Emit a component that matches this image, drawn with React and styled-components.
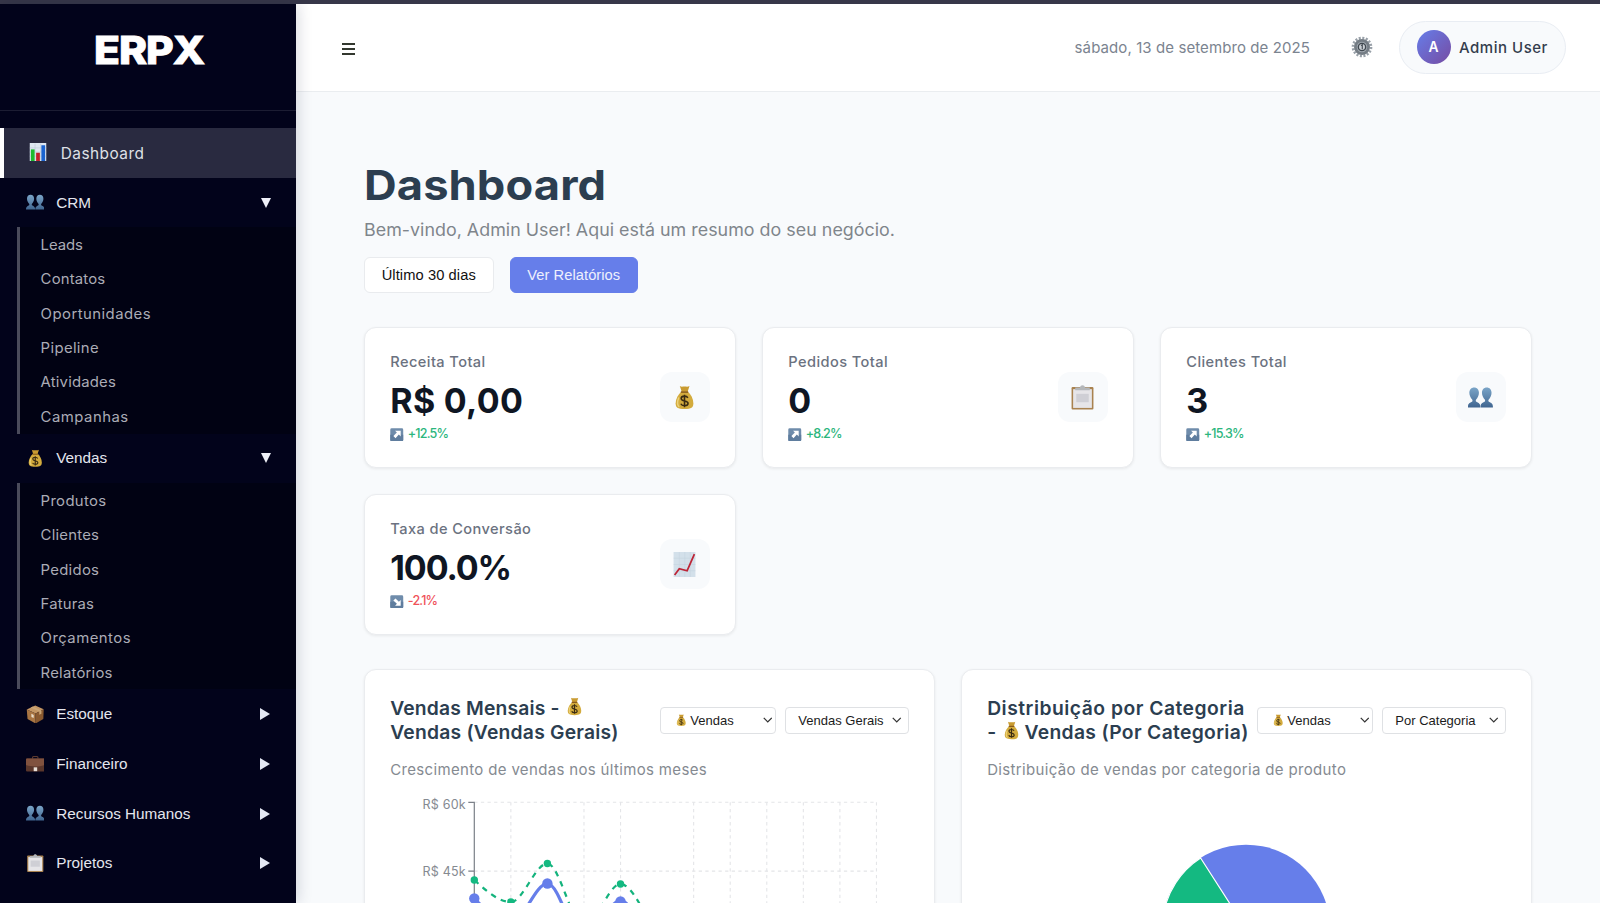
import React from 'react';
import styled, { createGlobalStyle, css } from 'styled-components';

const GlobalStyle = createGlobalStyle`
  *, *::before, *::after { box-sizing: border-box; }
  html, body { margin: 0; padding: 0; height: 100%; overflow: hidden; }
  body { background: #f8fafc; font-family: Inter, "Open Sans", sans-serif; color: #2c3e50; }
  button { font: inherit; color: inherit; border: 0; padding: 0; background: none; }
  h1, h2, p { margin: 0; }
`;

const ui = css`font-family: "Liberation Sans", Arial, sans-serif;`;

/* ---------- Shell ---------- */
const Shell = styled.div`
  display: flex;
  flex-direction: column;
  width: 1600px;
  height: 903px;
  overflow: hidden;
`;
const TopStrip = styled.div`
  flex: 0 0 4px;
  background: #373749;
`;
const Body = styled.div`
  display: flex;
  flex: 1;
  min-height: 0;
`;

/* ---------- Sidebar ---------- */
const Sidebar = styled.aside`
  flex: 0 0 296px;
  background: #02031b;
  box-shadow: 2px 0 14px rgba(15, 20, 50, 0.16);
  z-index: 2;
  overflow: hidden;
`;
const Brand = styled.div`
  height: 107px;
  padding: 23px 0 0 94px;
  border-bottom: 1px solid #1c1d33;
`;
const Logo = styled.div`
  width: max-content;
  color: #fff;
  font-size: 38px;
  line-height: 46px;
  font-weight: 800;
  letter-spacing: -0.9px;
  transform: scaleX(1.12);
  transform-origin: 0 0;
  -webkit-text-stroke: 0.9px #fff;
  paint-order: stroke;
  stroke-linejoin: round;
`;
const Nav = styled.nav`
  padding-top: 17px;
`;
const ActiveLink = styled.a`
  display: flex;
  align-items: center;
  height: 49.7px;
  padding: 1px 0 0 25px;
  border-left: 4.5px solid #fff;
  background: #292a40;
  color: #dfe0e6;
  font-size: 15.4px;
  letter-spacing: 0.46px;

  svg { margin: 0 13.8px 2px 0; }
`;
const GroupRow = styled.button`
  ${ui}
  display: flex;
  align-items: center;
  width: 100%;
  height: 49.7px;
  padding: 0 25px 0 25.5px;
  color: #e4e6ee;
  font-size: 15.3px;
  text-align: left;
`;
const GroupName = styled.span`
  flex: 1;
  padding-left: 12.2px;
`;
const Caret = styled.i`
  width: 0;
  height: 0;
  border-style: solid;
  ${(p) => (p.$open
    ? css`border-width: 10px 5.7px 0; border-color: #eef0f8 transparent transparent;`
    : css`margin-right: 1px; border-width: 6px 0 6px 10.5px; border-color: transparent transparent transparent #e4e8f4;`)}
`;
const SubMenu = styled.div`
  margin-left: 17px;
  border-left: 3px solid #4a4b5b;
  background: #010213;
`;
const SubLink = styled.a`
  display: flex;
  align-items: center;
  height: 34.37px;
  padding-left: 20.6px;
  color: #abacb6;
  font-size: 14.2px;
  letter-spacing: ${(p) => p.$track - 0.35}px;
  transform: scaleX(1.05);
  transform-origin: 20.6px 0;
`;

/* ---------- Header ---------- */
const Main = styled.div`
  flex: 1;
  min-width: 0;
`;
const Header = styled.header`
  display: flex;
  align-items: center;
  height: 87.5px;
  padding: 0 34.5px 0 46px;
  background: #fff;
  border-bottom: 1.5px solid #eaedf0;
`;
const MenuButton = styled.button`
  display: grid;
  gap: 3px;
  width: 12.6px;
  margin: 3px auto 0 0;
`;
const MenuBar = styled.span`
  height: 2px;
  background: #33382f;
`;
const Today = styled.span`
  color: #7b8490;
  font-size: 15px;
  letter-spacing: 0.09px;
`;
const Settings = styled.button`
  display: grid;
  margin: 0 25.5px 0 41px;
`;
const UserPill = styled.div`
  display: flex;
  align-items: center;
  width: 167px;
  height: 53px;
  padding-left: 17px;
  border: 1.5px solid #e9edf3;
  border-radius: 26.5px;
  background: #f8fafc;
  color: #343d4d;
  font-size: 15px;
  font-weight: 500;
  letter-spacing: 0.52px;
`;
const Avatar = styled.span`
  display: grid;
  place-items: center;
  width: 34px;
  height: 34px;
  margin-right: 8.5px;
  border-radius: 50%;
  background: linear-gradient(135deg, #667eea, #764ba2);
  color: #fff;
  font-size: 13.8px;
  font-weight: 600;
  letter-spacing: 0;
`;

/* ---------- Page ---------- */
const Page = styled.main`
  padding: 69px 68px 0 68px;
`;
const Title = styled.h1`
  width: max-content;
  color: #2c3e50;
  font-size: 41.5px;
  font-weight: 700;
  line-height: 49px;
  letter-spacing: 0.1px;
  transform: scaleX(1.09);
  transform-origin: 0 0;
`;
const Subtitle = styled.p`
  width: max-content;
  margin-top: 8.7px;
  color: #7f858b;
  font-size: 17px;
  line-height: 24px;
  letter-spacing: 0.02px;
  transform: scaleX(1.05);
  transform-origin: 0 0;
`;
const Actions = styled.div`
  display: flex;
  gap: 16.5px;
  margin: 14.7px 0 34.5px;
`;
const ActionButton = styled.button`
  ${ui}
  width: ${(p) => (p.$primary ? 127.5 : 129.5)}px;
  height: 36px;
  border: 1.5px solid ${(p) => (p.$primary ? '#667eea' : '#e9ebee')};
  border-radius: 6px;
  background: ${(p) => (p.$primary ? '#667eea' : '#fff')};
  color: ${(p) => (p.$primary ? '#eef0fd' : '#111')};
  font-size: 14.7px;
  letter-spacing: ${(p) => (p.$primary ? 0.05 : 0.08)}px;
`;
const card = css`
  border: 1.5px solid #eaecef;
  border-radius: 12px;
  background: #fff;
  box-shadow: 0 1px 3px rgba(0, 0, 0, 0.07);
`;
const StatGrid = styled.section`
  display: grid;
  grid-template-columns: repeat(3, 1fr);
  grid-auto-rows: 141px;
  gap: 26px;
`;
const StatCard = styled.article`
  ${card}
  display: flex;
  align-items: flex-start;
  justify-content: space-between;
  padding: 23px 25.5px 0 25.3px;
`;
const StatLabel = styled.p`
  color: #6b7280;
  font-size: 14.6px;
  font-weight: 500;
  line-height: 22px;
  letter-spacing: 0.42px;
`;
const StatValue = styled.p`
  margin-top: 7.3px;
  color: #0f1623;
  font-size: 34px;
  font-weight: 700;
  line-height: 40px;
  letter-spacing: ${(p) => p.$track}px;
`;
const Change = styled.p`
  display: flex;
  align-items: center;
  gap: 4px;
  margin-top: 5.7px;
  color: ${(p) => (p.$down ? '#f0525a' : '#2cb67d')};
  font-size: 12.6px;
  font-weight: 500;
  line-height: 16px;
  letter-spacing: -0.85px;
`;
const StatIcon = styled.div`
  display: grid;
  place-items: center;
  width: 50px;
  height: 50px;
  margin-top: 21px;
  border-radius: 12px;
  background: #f8fafc;
`;

/* ---------- Chart cards ---------- */
const ChartGrid = styled.section`
  display: grid;
  grid-template-columns: 1fr 1fr;
  gap: 26px;
  margin-top: 34px;
`;
const ChartCard = styled.article`
  ${card}
  height: 460px;
  padding: 25.7px 25.2px 0 25.2px;
`;
const ChartHead = styled.div`
  display: flex;
  align-items: center;
  justify-content: space-between;
`;
const ChartTitle = styled.h2`
  color: #2c3e50;
  font-size: 19.3px;
  font-weight: 600;
  line-height: 24.2px;
  white-space: nowrap;
`;
const TitleLine = styled.span`
  display: flex;
  align-items: center;
  letter-spacing: ${(p) => p.$track}px;
  svg { margin: 0 4px 3px 5px; }
`;
const Selects = styled.div`
  display: flex;
  gap: 8.5px;
`;
const Select = styled.button`
  ${ui}
  display: flex;
  align-items: center;
  width: ${(p) => p.$width}px;
  height: 27px;
  padding: 0 3px 0 12.5px;
  border: 1.5px solid #dfe1e4;
  border-radius: 4px;
  background: #fff;
  color: #1b1b1b;
  font-size: 13px;
  letter-spacing: 0;

  svg:first-child { margin-right: 3px; margin-left: 1px; }
  svg:last-child { margin-left: auto; }
`;
const ChartNote = styled.p`
  margin-top: 15.8px;
  color: #858a91;
  font-size: 15px;
  line-height: 20px;
  letter-spacing: 0.34px;
`;
const Plot = styled.svg`
  display: block;
  width: 518px;
  height: 300px;
  margin-top: 10.3px;
`;
const AxisText = styled.text`
  fill: #858a91;
  font-size: 12.5px;
  letter-spacing: 0.2px;
`;

/* ---------- Icons ---------- */
function Icon({ name, size = 18 }) {
  return (
    <svg width={size} height={size} viewBox="0 0 24 24" fill="none" aria-hidden="true">
      {glyphs[name]}
    </svg>
  );
}

const bust = 'M0 20.5c0-3 2.6-3.6 4-4.6.5-.4.4-1.4 0-2C2.600 12.300 1.300 10 1.300 7.400 1.300 4.400 3.100 2.300 5.900 2.300s4.600 2.100 4.600 5.100c0 2.600-1.300 4.900-2.700 6.500-.4.600-.5 1.600 0 2 1.400 1 4 1.600 4 4.600v1H0z';

const glyphs = {
  bars: (
    <>
      <rect x="1" y="0" width="22" height="24" fill="#dfe7f1" />
      <path d="M1 6.500h22M1 12h22M1 17.500h22M8 1v22M15.500 1v22" stroke="#b8c6d8" strokeWidth=".7" />
      <rect x="2.500" y="8.500" width="5" height="15.500" fill="#1dbb2f" />
      <rect x="9.500" y="13" width="5" height="11" fill="#c3202b" />
      <rect x="16.500" y="3" width="5" height="21" fill="#1a63cf" />
    </>
  ),
  people: (
    <>
      <defs>
        <linearGradient id="bust" x1="0" y1="2" x2="0" y2="22" gradientUnits="userSpaceOnUse">
          <stop stopColor="#7ba6c9" /><stop offset="1" stopColor="#3f648f" />
        </linearGradient>
      </defs>
      <path d={bust} fill="url(#bust)" />
      <path d={bust} fill="url(#bust)" transform="translate(12.100 0)" />
    </>
  ),
  money: (
    <>
      <path d="M7.500 1c1.500 1 2.500.5 4.500.5S15 2 16.800 1L15 6.500H9.300z" fill="#c99b31" />
      <path d="M9 6.200h6.200c3 3 5.300 6.800 5.300 11.300 0 4-1.800 5.500-8.500 5.500s-8.500-1.500-8.500-5.500C3.500 13 6 9.200 9 6.200z" fill="#d3ab3d" />
      <path d="M6.500 12c-1.500 4-1.500 7.500.5 9" stroke="#ecd27a" strokeWidth="1.400" />
      <path d="M8.500 6.800h7" stroke="#8a5b1c" strokeWidth="1.500" />
      <path d="M15.200 12.300c-.6-1.200-1.800-1.600-3.200-1.600-1.900 0-3.200.9-3.200 2.300 0 3.300 6.600 1.500 6.600 4.600 0 1.500-1.500 2.300-3.400 2.300-1.600 0-2.900-.6-3.500-1.900M12 9.300v12" stroke="#3a2b12" strokeWidth="1.500" />
    </>
  ),
  box: (
    <>
      <path d="M12 .5 23 5.500 12.500 11 1 5.700z" fill="#c39664" />
      <path d="M1 5.700 12.500 11v13L2 18.300z" fill="#a87543" />
      <path d="M23 5.500 12.500 11v13L22.500 18z" fill="#8a5a30" />
      <path d="m6 3.300 11.200 5.200v4.300l2.800-1.500V7L9 2z" fill="#c9a475" />
      <path d="M7 11.500l3 1.500v4l-3-1.500z" fill="#e9dcc9" />
    </>
  ),
  briefcase: (
    <>
      <path d="M8.500 5V3.200c0-.8.500-1.200 1.200-1.200h4.600c.7 0 1.200.4 1.200 1.200V5" stroke="#5d3b30" strokeWidth="1.500" />
      <rect x="0" y="4.500" width="24" height="17" rx="1.500" fill="#5a372c" />
      <path d="M0 6c0-1 .6-1.500 1.500-1.500h21c.9 0 1.500.5 1.500 1.500v7c-7 2.500-17 2.500-24 0z" fill="#80523f" />
      <rect x="10" y="16" width="4.500" height="5" fill="#e9e0d8" />
    </>
  ),
  clipboard: (
    <>
      <rect x="1.500" y="2" width="21" height="21.500" rx="1" fill="#a9824f" />
      <rect x="3" y="4" width="18" height="18" fill="#e6e5e8" />
      <path d="M6 8.500h12v8H6z" fill="#cfcfd5" />
      <path d="M5 2.500h4.500C10 1 10.800.3 12 .3s2 .7 2.500 2.200H19v2.500H5z" fill="#b4b7ba" />
    </>
  ),
  trend: (
    <>
      <rect x="1.500" y="0" width="21" height="24" fill="#d3e0ea" />
      <path d="M1.500 6h21M1.500 12h21M1.500 18h21M7 0v24M12.300 0v24M17.600 0v24" stroke="#c3d2de" strokeWidth=".5" />
      <path d="M2.500 22 7 16l7.500 2L21.500 2" stroke="#bd2537" strokeWidth="1.700" />
    </>
  ),
  gear: (
    <>
      <circle cx="12" cy="12" r="9.800" stroke="#98a0a8" strokeWidth="3" strokeDasharray="2.200 1.649" />
      <circle cx="12" cy="12" r="7.200" fill="#a3abb2" stroke="#747c84" strokeWidth="3" />
      <circle cx="12" cy="12" r="4" fill="#c9ced3" stroke="#3f474f" strokeWidth="1.500" />
      <path d="M11 10.500 12.300 9.500v5" stroke="#3f474f" strokeWidth="1.200" />
    </>
  ),
  up: (
    <>
      <rect x=".5" y=".5" width="23" height="23" rx="2.500" fill="#6f8cab" />
      <path d="M.5 12h23v9a2.500 2.500 0 0 1-2.500 2.500H3A2.500 2.500 0 0 1 .5 21z" fill="#5f7d9e" />
      <path d="M9 5h10v10l-3.300-3.300L9.800 18 6 14.200l6.200-6z" fill="#fff" />
    </>
  ),
  down: (
    <>
      <rect x=".5" y=".5" width="23" height="23" rx="2.500" fill="#6f8cab" />
      <path d="M.5 12h23v9a2.500 2.500 0 0 1-2.500 2.500H3A2.500 2.500 0 0 1 .5 21z" fill="#5f7d9e" />
      <path d="M19 9v10H9l3.300-3.300L6 9.800 9.800 6l6 6.200z" fill="#fff" />
    </>
  ),
};

function Chevron() {
  return (
    <svg width="9.500" height="8" viewBox="0 0 10 8" fill="none">
      <path d="M.8 1.700 5 6 9.200 1.700" stroke="#333" strokeWidth="1.300" />
    </svg>
  );
}

/* ---------- Data ---------- */
const groups = [
  { name: 'CRM', icon: 'people', links: [['Leads', 0.25], ['Contatos', 0.5], ['Oportunidades', 0.78], ['Pipeline', 0.68], ['Atividades', 0.52], ['Campanhas', 0.8]] },
  { name: 'Vendas', icon: 'money', links: [['Produtos', 0.66], ['Clientes', 0.55], ['Pedidos', 0.6], ['Faturas', 0.5], ['Orçamentos', 0.78], ['Relatórios', 0.55]] },
  { name: 'Estoque', icon: 'box' },
  { name: 'Financeiro', icon: 'briefcase' },
  { name: 'Recursos Humanos', icon: 'people' },
  { name: 'Projetos', icon: 'clipboard' },
];

const stats = [
  { label: 'Receita Total', value: 'R$ 0,00', track: 0.3, change: '+12.5%', icon: 'money' },
  { label: 'Pedidos Total', value: '0', track: 0, change: '+8.2%', icon: 'clipboard' },
  { label: 'Clientes Total', value: '3', track: 0, change: '+15.3%', icon: 'people' },
  { label: 'Taxa de Conversão', value: '100.0%', track: -1.1, change: '-2.1%', down: true, icon: 'trend' },
];

const gridColumns = [1, 3, 4, 6, 7, 8, 9, 10, 11];
const step = 36.56;
const axisX = 84.3;

function SalesChart() {
  return (
    <Plot viewBox="0 0 518 300" fill="none">
      <g stroke="#e4e5e8" strokeWidth="1.100" strokeDasharray="3.300 3.300">
        <path d={`M${axisX} 11.300H486.500M${axisX} 80.100H486.500M${axisX} 149H486.500`} />
        {gridColumns.map((n) => <path key={n} d={`M${axisX + n * step} 11.300V220`} />)}
      </g>
      <path d={`M${axisX - 6} 11.300H${axisX}V220M${axisX - 6} 80.100H${axisX}`} stroke="#7b8088" strokeWidth="1.200" />
      <AxisText x="32.500" y="18">R$ 60k</AxisText>
      <AxisText x="32.500" y="85">R$ 45k</AxisText>
      <path
        d="M84.300 107.500C96.500 120 108.700 132 120.900 132 133 132 145.200 92.500 157.400 92.500S181.800 150 194 150 218.300 109.500 230.500 109.500 254.900 150 267 160"
        stroke="#667eea" strokeWidth="3.200"
      />
      <path
        d="M84.300 89C96.500 100 108.700 111 120.900 111 133 111 145.200 72.500 157.400 72.500S181.800 135 194 135 218.300 93 230.500 93 254.900 125 267 145"
        stroke="#14b37d" strokeWidth="2.200" strokeDasharray="5.500 5.500"
      />
      <g fill="#667eea">
        <circle cx="84.300" cy="107.500" r="5.200" /><circle cx="157.400" cy="92.500" r="5.200" /><circle cx="230.500" cy="110.500" r="5.200" />
      </g>
      <g fill="#14b981">
        <circle cx="84.300" cy="89" r="3.700" /><circle cx="120.900" cy="111" r="3.700" /><circle cx="157.400" cy="72.500" r="3.700" /><circle cx="230.500" cy="93" r="3.700" />
      </g>
    </Plot>
  );
}

function CategoryChart() {
  return (
    <Plot viewBox="0 0 518 300">
      <circle cx="259" cy="137.700" r="84" fill="#667eea" />
      <path d="M259 137.700 213.600 67A84 84 0 0 0 200 197.100z" fill="#14b981" stroke="#fff" strokeWidth="1.200" />
    </Plot>
  );
}

export default function App() {
  return (
    <>
      <GlobalStyle />
      <Shell>
        <TopStrip />
        <Body>
          <Sidebar>
            <Brand><Logo>ERPX</Logo></Brand>
            <Nav>
              <ActiveLink><Icon name="bars" size={18} />Dashboard</ActiveLink>
              {groups.map((g) => (
                <React.Fragment key={g.name}>
                  <GroupRow>
                    <Icon name={g.icon} size={18.5} />
                    <GroupName>{g.name}</GroupName>
                    <Caret $open={Boolean(g.links)} />
                  </GroupRow>
                  {g.links && (
                    <SubMenu>
                      {g.links.map(([label, track]) => <SubLink key={label} $track={track}>{label}</SubLink>)}
                    </SubMenu>
                  )}
                </React.Fragment>
              ))}
            </Nav>
          </Sidebar>
          <Main>
            <Header>
              <MenuButton aria-label="Menu"><MenuBar /><MenuBar /><MenuBar /></MenuButton>
              <Today>sábado, 13 de setembro de 2025</Today>
              <Settings><Icon name="gear" size={22} /></Settings>
              <UserPill><Avatar>A</Avatar>Admin User</UserPill>
            </Header>
            <Page>
              <Title>Dashboard</Title>
              <Subtitle>Bem-vindo, Admin User! Aqui está um resumo do seu negócio.</Subtitle>
              <Actions>
                <ActionButton>Último 30 dias</ActionButton>
                <ActionButton $primary>Ver Relatórios</ActionButton>
              </Actions>
              <StatGrid>
                {stats.map((s) => (
                  <StatCard key={s.label}>
                    <div>
                      <StatLabel>{s.label}</StatLabel>
                      <StatValue $track={s.track}>{s.value}</StatValue>
                      <Change $down={s.down}><Icon name={s.down ? 'down' : 'up'} size={13.5} />{s.change}</Change>
                    </div>
                    <StatIcon><Icon name={s.icon} size={25} /></StatIcon>
                  </StatCard>
                ))}
              </StatGrid>
              <ChartGrid>
                <ChartCard>
                  <ChartHead>
                    <ChartTitle>
                      <TitleLine $track={0.16}>Vendas Mensais - <Icon name="money" size={19} /></TitleLine>
                      <TitleLine $track={0.22}>Vendas (Vendas Gerais)</TitleLine>
                    </ChartTitle>
                    <Selects>
                      <Select $width={116}><Icon name="money" size={12.5} />Vendas<Chevron /></Select>
                      <Select $width={124}>Vendas Gerais<Chevron /></Select>
                    </Selects>
                  </ChartHead>
                  <ChartNote>Crescimento de vendas nos últimos meses</ChartNote>
                  <SalesChart />
                </ChartCard>
                <ChartCard>
                  <ChartHead>
                    <ChartTitle>
                      <TitleLine $track={0.5}>Distribuição por Categoria</TitleLine>
                      <TitleLine $track={0.33}>- <Icon name="money" size={19} />Vendas (Por Categoria)</TitleLine>
                    </ChartTitle>
                    <Selects>
                      <Select $width={116}><Icon name="money" size={12.5} />Vendas<Chevron /></Select>
                      <Select $width={124}>Por Categoria<Chevron /></Select>
                    </Selects>
                  </ChartHead>
                  <ChartNote>Distribuição de vendas por categoria de produto</ChartNote>
                  <CategoryChart />
                </ChartCard>
              </ChartGrid>
            </Page>
          </Main>
        </Body>
      </Shell>
    </>
  );
}
